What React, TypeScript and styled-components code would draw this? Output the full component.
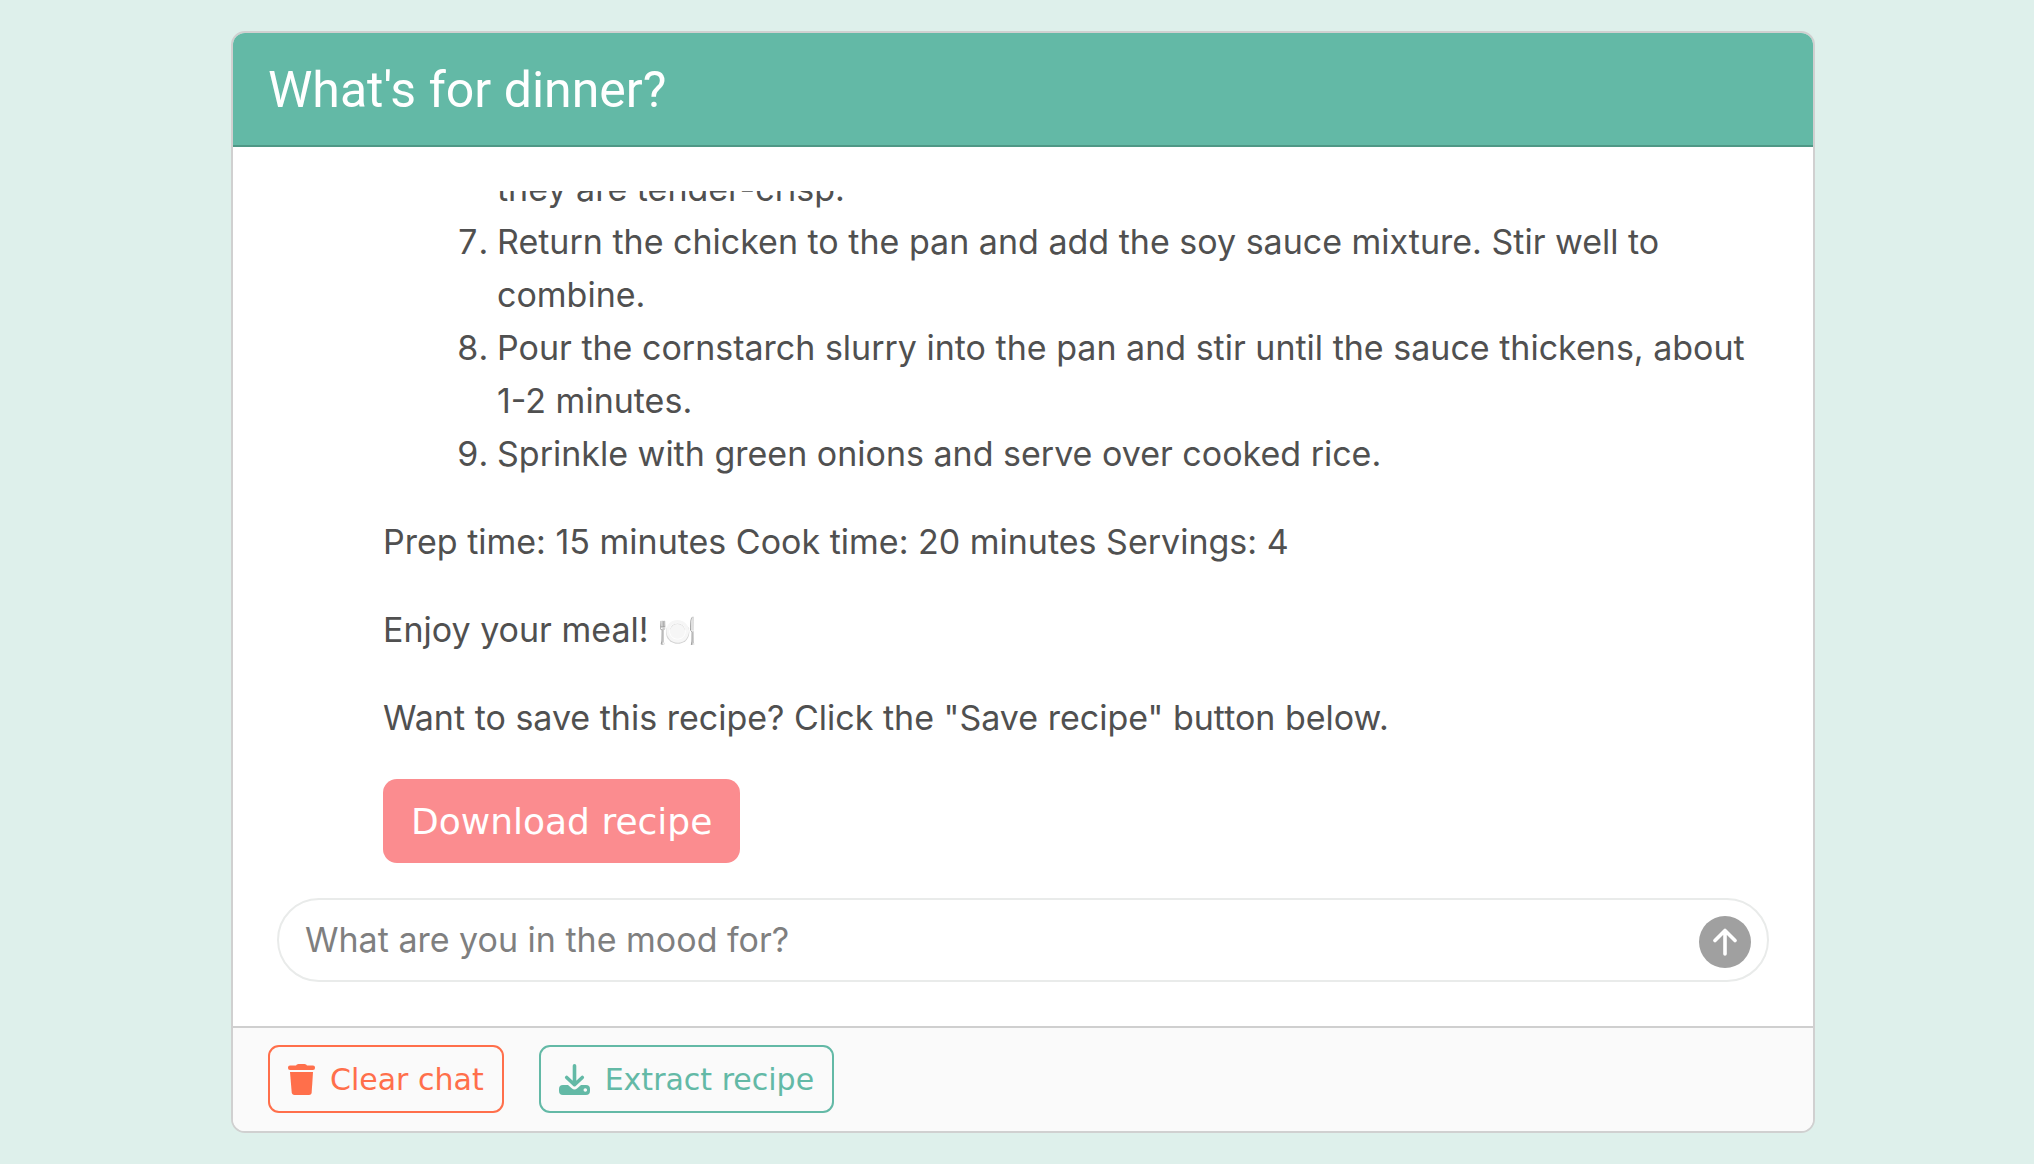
import { useState } from "react";
import styled, { createGlobalStyle } from "styled-components";

const bodyFont = `Inter, "Liberation Sans", sans-serif`;
const titleFont = `Roboto, "Liberation Sans", sans-serif`;
const buttonFont = `"DejaVu Sans", Inter, sans-serif`;

const green = "#63b9a6";
const coral = "#ff6f4b";

const GlobalStyle = createGlobalStyle`
  *, *::before, *::after { box-sizing: border-box; }
  body {
    margin: 0;
    background: #def0eb;
    color: #505050;
    font-family: ${bodyFont};
    font-size: 34px;
    line-height: 53px;
  }
`;

const Page = styled.main`
  display: flex;
  height: 100vh;
  padding: 31px 219px 31px 231px;
`;

const Card = styled.section`
  display: flex;
  flex: 1;
  flex-direction: column;
  min-width: 0;
  overflow: hidden;
  border: 2px solid #d0d0d0;
  border-radius: 14px;
  background: #fff;
`;

const CardHeader = styled.header`
  padding: 26px 35px 24px;
  border-bottom: 2px solid #4f9886;
  background: ${green};
  color: #fff;
`;

const Title = styled.h1`
  margin: 0;
  font-family: ${titleFont};
  font-size: 50px;
  font-weight: 400;
  line-height: 62px;
`;

const CardBody = styled.div`
  display: flex;
  flex: 1;
  flex-direction: column;
  gap: 35px;
  min-height: 0;
  padding: 44px;
`;

const Messages = styled.div`
  display: flex;
  flex: 1;
  flex-direction: column;
  justify-content: flex-end;
  min-height: 0;
  overflow: hidden;
`;

const Message = styled.article`
  display: flex;
  flex-direction: column;
  align-items: flex-start;
  gap: 35px;
  padding-left: 106px;
`;

const Steps = styled.ol`
  margin: 0;
  padding-left: 114px;
`;

const Step = styled.li<{ $continued?: boolean }>`
  list-style: ${(p) => (p.$continued ? "none" : "decimal")};
`;

const Paragraph = styled.p`
  margin: 0;
`;

const Emoji = styled.span`
  font-size: 31px;
  line-height: 1;
`;

const DownloadButton = styled.button`
  height: 84px;
  padding: 0 28px;
  border: 0;
  border-radius: 14px;
  background: #fb8c8f;
  color: #fff;
  font-family: ${buttonFont};
  font-size: 36px;
  cursor: pointer;
`;

const Composer = styled.form`
  display: flex;
  flex: none;
  align-items: center;
  height: 84px;
  padding: 4px 16px 0 26px;
  border: 2px solid #e9ebea;
  border-radius: 42px;
`;

const PromptInput = styled.input`
  flex: 1;
  min-width: 0;
  height: 80px;
  padding: 0 0 6px;
  border: 0;
  outline: 0;
  background: transparent;
  color: inherit;
  font: inherit;

  &::placeholder {
    color: #7f7f7f;
    opacity: 1;
  }
`;

const SendButton = styled.button`
  display: grid;
  place-items: center;
  width: 52px;
  height: 52px;
  padding: 0;
  border: 0;
  border-radius: 50%;
  background: #a0a0a0;
  cursor: pointer;
`;

const CardFooter = styled.footer`
  display: flex;
  gap: 35px;
  padding: 17px 35px 18px;
  border-top: 2px solid #cfcfcf;
  background: #fafafa;
`;

const OutlineButton = styled.button<{ $color: string }>`
  display: flex;
  align-items: center;
  gap: 15px;
  height: 68px;
  padding: 0 18px;
  border: 2px solid ${(p) => p.$color};
  border-radius: 11px;
  background: transparent;
  color: ${(p) => p.$color};
  font-family: ${buttonFont};
  font-size: 30px;
  cursor: pointer;
`;

const TrashIcon = () => (
  <svg width="27" height="31" viewBox="0 0 27 31" fill="currentColor" aria-hidden="true">
    <path d="M8 1.500Q8.500 0 10.500 0h6q2 0 2.500 1.500h6q2 0 2 2v.5q0 2-2 2H2q-2 0-2-2v-.5q0-2 2-2z" />
    <path d="M2 8h23l-1.300 20.300Q23.500 31 21 31H6.500Q4 31 3.700 28.300z" />
  </svg>
);

const DownloadIcon = () => (
  <svg width="31" height="31" viewBox="0 0 31 31" fill="none" aria-hidden="true">
    <path
      d="M15.500 1.800V19.500M7.700 13.500l7.800 7.200 7.800-7.200"
      stroke="currentColor"
      strokeWidth="3.600"
      strokeLinecap="round"
      strokeLinejoin="round"
    />
    <path
      fill="currentColor"
      fillRule="evenodd"
      d="M4 21h5l3.700 3.300q2.800 2.400 5.600 0L22 21h5q4 0 4 4v2q0 4-4 4H4q-4 0-4-4v-2q0-4 4-4zM26.300 24.200a1.800 1.800 0 1 0 0 3.600 1.800 1.800 0 1 0 0-3.600z"
    />
  </svg>
);

const ArrowUpIcon = () => (
  <svg width="24" height="28" viewBox="0 0 24 28" fill="none" aria-hidden="true">
    <path
      d="M12 26V2.500M2 12.500l10-10 10 10"
      stroke="#fff"
      strokeWidth="3.600"
      strokeLinecap="round"
      strokeLinejoin="round"
    />
  </svg>
);

export default function App() {
  const [prompt, setPrompt] = useState("");

  return (
    <Page>
      <GlobalStyle />
      <Card>
        <CardHeader>
          <Title>What's for dinner?</Title>
        </CardHeader>
        <CardBody>
          <Messages>
            <Message>
              <Steps start={6}>
                <Step $continued>they are tender-crisp.</Step>
                <Step>
                  Return the chicken to the pan and add the soy sauce mixture. Stir well to combine.
                </Step>
                <Step>
                  Pour the cornstarch slurry into the pan and stir until the sauce thickens, about
                  1-2 minutes.
                </Step>
                <Step>Sprinkle with green onions and serve over cooked rice.</Step>
              </Steps>
              <Paragraph>Prep time: 15 minutes Cook time: 20 minutes Servings: 4</Paragraph>
              <Paragraph>
                Enjoy your meal! <Emoji>🍽️</Emoji>
              </Paragraph>
              <Paragraph>
                Want to save this recipe? Click the "Save recipe" button below.
              </Paragraph>
              <DownloadButton type="button">Download recipe</DownloadButton>
            </Message>
          </Messages>
          <Composer onSubmit={(e) => e.preventDefault()}>
            <PromptInput
              type="text"
              aria-label="What are you in the mood for?"
              placeholder="What are you in the mood for?"
              value={prompt}
              onChange={(e) => setPrompt(e.target.value)}
            />
            <SendButton type="submit" aria-label="Send">
              <ArrowUpIcon />
            </SendButton>
          </Composer>
        </CardBody>
        <CardFooter>
          <OutlineButton type="button" $color={coral}>
            <TrashIcon />
            Clear chat
          </OutlineButton>
          <OutlineButton type="button" $color={green}>
            <DownloadIcon />
            Extract recipe
          </OutlineButton>
        </CardFooter>
      </Card>
    </Page>
  );
}
